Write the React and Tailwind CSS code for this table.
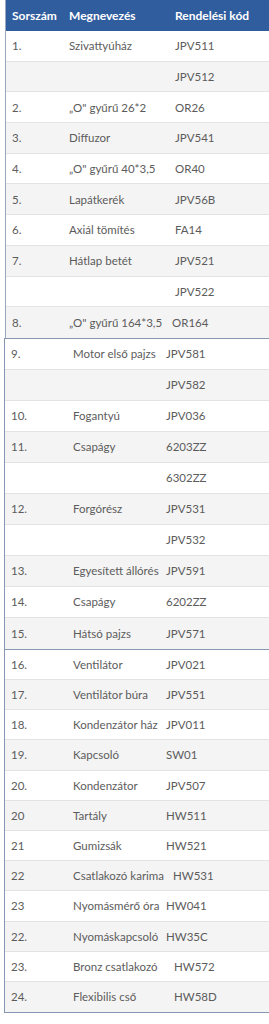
import React from 'react';

const part1 = [
  ['1.', 'Szivattyúház', 'JPV511'],
  ['', '', 'JPV512'],
  ['2.', '„O" gyűrű 26*2', 'OR26'],
  ['3.', 'Diffuzor', 'JPV541'],
  ['4.', '„O" gyűrű 40*3,5', 'OR40'],
  ['5.', 'Lapátkerék', 'JPV56B'],
  ['6.', 'Axiál tömítés', 'FA14'],
  ['7.', 'Hátlap betét', 'JPV521'],
  ['', '', 'JPV522'],
  ['8.', '„O" gyűrű 164*3,5', 'OR164', 'pl-[3px]'],
];

const part2 = [
  ['9.', 'Motor első pajzs', 'JPV581'],
  ['', '', 'JPV582'],
  ['10.', 'Fogantyú', 'JPV036'],
  ['11.', 'Csapágy', '6203ZZ'],
  ['', '', '6302ZZ'],
  ['12.', 'Forgórész', 'JPV531'],
  ['', '', 'JPV532'],
  ['13.', 'Egyesített állórés', 'JPV591'],
  ['14.', 'Csapágy', '6202ZZ'],
  ['15.', 'Hátsó pajzs', 'JPV571'],
];

const part3 = [
  ['16.', 'Ventilátor', 'JPV021'],
  ['17.', 'Ventilátor búra', 'JPV551'],
  ['18.', 'Kondenzátor ház', 'JPV011'],
  ['19.', 'Kapcsoló', 'SW01'],
  ['20.', 'Kondenzátor', 'JPV507'],
  ['20', 'Tartály', 'HW511'],
  ['21', 'Gumizsák', 'HW521'],
  ['22', 'Csatlakozó karima', 'HW531', 'pl-[13px]'],
  ['23', 'Nyomásmérő óra', 'HW041'],
  ['22.', 'Nyomáskapcsoló', 'HW35C'],
  ['23.', 'Bronz csatlakozó', 'HW572', 'pl-[14px]'],
  ['24.', 'Flexibilis cső', 'HW58D', 'pl-[14px]'],
];

const Rows = ({ rows, cols, h }) => (
  <>
    {rows.map((r, i) => (
      <div
        key={i}
        className={`grid ${cols} ${h} items-center border-b border-[#e3e3e3] last:border-b-0 ${i % 2 ? 'bg-[#f4f4f4]' : 'bg-white'}`}
      >
        <div className="pl-[6px]">{r[0]}</div>
        <div className="pl-[6px] whitespace-nowrap">{r[1]}</div>
        <div className={r[3] || 'pl-[6px]'}>{r[2]}</div>
      </div>
    ))}
  </>
);

export default function App() {
  return (
    <div className="w-[269px] bg-white pb-[11px] text-[11.5px] text-[#5c5c5c] overflow-hidden" style={{ fontFamily: 'Lato, "Liberation Sans", sans-serif' }}>
      <div className="ml-[5px] border-l border-[#9aa8bf]">
        <div className="grid grid-cols-[57px_106px_1fr] h-[31px] items-center bg-[#2f5d9e] text-[12px] font-bold text-white">
          <div className="pl-[6px]">Sorszám</div>
          <div className="pl-[6px]">Megnevezés</div>
          <div className="pl-[6px]">Rendelési kód</div>
        </div>
        <Rows rows={part1} cols="grid-cols-[57px_106px_1fr]" h="h-[30.7px]" />
      </div>
      <div className="ml-[4px] border-l border-t border-[#8797b2]">
        <Rows rows={part2} cols="grid-cols-[62px_93px_1fr]" h="h-[31px]" />
      </div>
      <div className="ml-[4px] border-l border-t border-b border-[#8797b2]">
        <Rows rows={part3} cols="grid-cols-[62px_93px_1fr]" h="h-[30.2px]" />
      </div>
    </div>
  );
}
